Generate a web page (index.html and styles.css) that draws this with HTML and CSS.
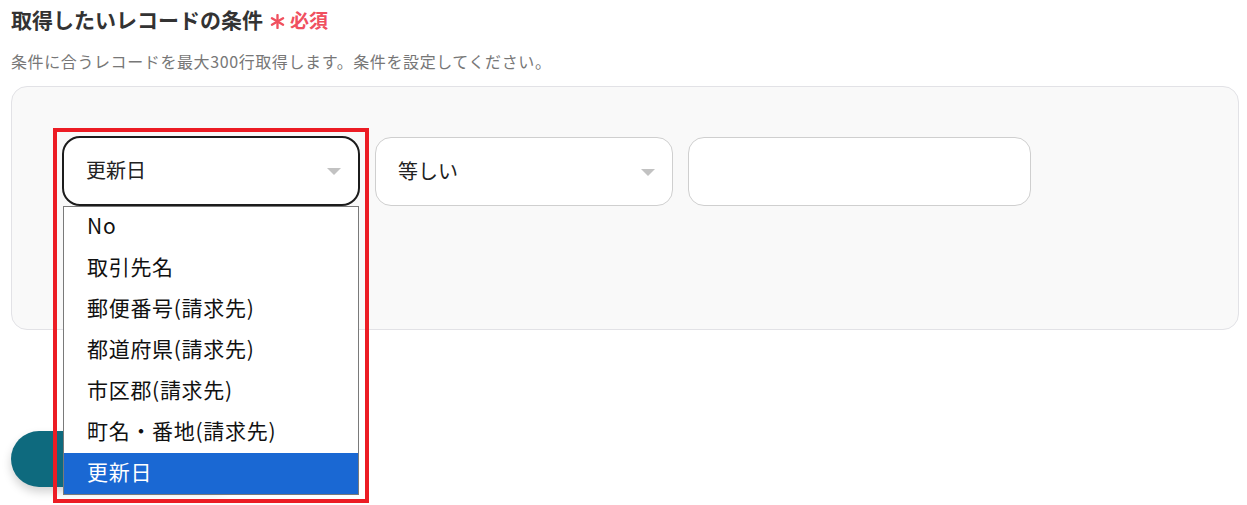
FILE: index.html
```html
<!DOCTYPE html>
<html lang="ja">
<head>
<meta charset="utf-8">
<link rel="stylesheet" href="styles.css">
</head>
<body>
<div class="page">
  <div class="heading">
    <h2 class="title">取得したいレコードの条件</h2>
    <span class="req">
      <svg class="star" width="15" height="15" viewBox="0 0 14 14"><g stroke="#f0505f" stroke-width="2.2" stroke-linecap="round"><line x1="7" y1="1" x2="7" y2="13"/><line x1="1.8" y1="4" x2="12.2" y2="10"/><line x1="1.8" y1="10" x2="12.2" y2="4"/></g></svg>
      必須
    </span>
  </div>
  <p class="desc">条件に合うレコードを最大300行取得します。条件を設定してください。</p>
  <div class="panel">
    <div class="row">
      <div class="field-wrap">
        <div class="select active">更新日<span class="arrow"></span></div>
        <ul class="options">
          <li>No</li>
          <li>取引先名</li>
          <li>郵便番号(請求先)</li>
          <li>都道府県(請求先)</li>
          <li>市区郡(請求先)</li>
          <li>町名・番地(請求先)</li>
          <li class="selected">更新日</li>
        </ul>
        <div class="mark"></div>
      </div>
      <div class="select op">等しい<span class="arrow"></span></div>
      <div class="input"></div>
    </div>
  </div>
  <div class="actions"><button class="primary"></button></div>
</div>
</body>
</html>
```
FILE: styles.css
```css
html, body {
  margin: 0;
  padding: 0;
  background: #ffffff;
}
body {
  font-family: "Noto Sans CJK JP", "Noto Sans", sans-serif;
  color: #222;
}
.page {
  box-sizing: border-box;
  min-height: 505px;
  padding: 4px 8px 0 11px;
}
.heading {
  display: flex;
  align-items: center;
  height: 30px;
}
.title {
  margin: 0;
  font-size: 21px;
  line-height: 30px;
  font-weight: 700;
  color: #333;
}
.req {
  display: flex;
  align-items: center;
  margin-left: 7px;
  font-size: 19px;
  font-weight: 700;
  color: #f0505f;
  gap: 5px;
}
.star {
  margin-top: 4px;
}
.desc {
  margin: 16px 0 0;
  font-size: 16px;
  line-height: 22px;
  color: #777;
  letter-spacing: 0.6px;
}
.panel {
  margin-top: 14px;
  width: 1228px;
  height: 244px;
  box-sizing: border-box;
  border: 1px solid #e2e2e6;
  border-radius: 16px;
  background: #f9f9f9;
  padding: 50px 0 0 50px;
}
.row {
  display: flex;
  align-items: flex-start;
  gap: 15px;
}
.field-wrap {
  position: relative;
  width: 298px;
  z-index: 3;
}
.select {
  position: relative;
  box-sizing: border-box;
  height: 69px;
  width: 298px;
  border: 1px solid #cfcfcf;
  border-radius: 16px;
  background: #fff;
  padding: 0 0 3px 22px;
  display: flex;
  align-items: center;
  font-size: 20px;
  color: #222;
}
.select.active {
  width: 298px;
  height: 70px;
  border: 2px solid #1c1c1c;
  border-radius: 18px;
  margin-top: -1px;
}
.arrow {
  position: absolute;
  right: 17px;
  top: 50%;
  margin-top: -3px;
  width: 0;
  height: 0;
  border-left: 7px solid transparent;
  border-right: 7px solid transparent;
  border-top: 7px solid #c2c2c2;
}
.input {
  box-sizing: border-box;
  height: 69px;
  width: 343px;
  border: 1px solid #cfcfcf;
  border-radius: 16px;
  background: #fff;
}
.options {
  position: absolute;
  left: 1px;
  top: 69px;
  width: 296px;
  box-sizing: border-box;
  margin: 0;
  padding: 0;
  list-style: none;
  background: #fff;
  border: 1px solid #7a7a7a;
}
.options li {
  height: 41px;
  line-height: 36px;
  padding-left: 23px;
  font-size: 21px;
  letter-spacing: 0.7px;
  color: #111;
  white-space: nowrap;
}
.options li.selected {
  background: #1a68d3;
  color: #fff;
}
.mark {
  position: absolute;
  left: -9px;
  top: -9px;
  width: 316px;
  height: 375px;
  box-sizing: border-box;
  border: 4px solid #ec1c24;
  pointer-events: none;
}
.actions {
  margin-top: 101px;
}
.primary {
  display: block;
  width: 230px;
  height: 56px;
  border: none;
  border-radius: 28px;
  background: #0e6a7e;
  box-shadow: 0 5px 10px rgba(0, 0, 0, 0.18);
}
```
